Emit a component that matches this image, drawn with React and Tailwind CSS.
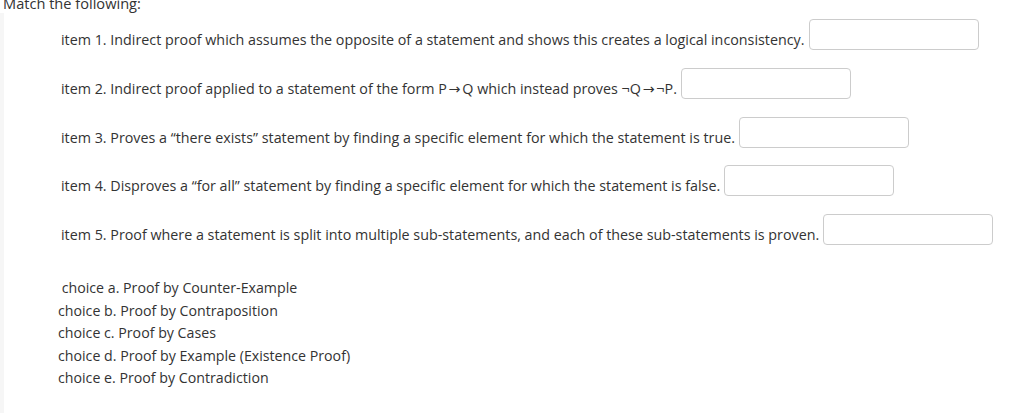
const Arrow = () => <span className="px-[1.75px]">{"\u2192"}</span>;

const items = [
  "item 1. Indirect proof which assumes the opposite of a statement and shows this creates a logical inconsistency.",
  <>
    item 2. Indirect proof applied to a statement of the form P<Arrow />Q which instead proves ¬Q<Arrow />¬P.
  </>,
  "item 3. Proves a \u201cthere exists\u201d statement by finding a specific element for which the statement is true.",
  "item 4. Disproves a \u201cfor all\u201d statement by finding a specific element for which the statement is false.",
  "item 5. Proof where a statement is split into multiple sub-statements, and each of these sub-statements is proven.",
];

const choices = [
  "\u00a0choice a. Proof by Counter-Example",
  "choice b. Proof by Contraposition",
  "choice c. Proof by Cases",
  "choice d. Proof by Example (Existence Proof)",
  "choice e. Proof by Contradiction",
];

export default function App() {
  return (
    <div
      className="w-[1020px] h-[413px] overflow-hidden bg-white text-[#333333]"
      style={{ fontFamily: '"Open Sans", "DejaVu Sans", sans-serif' }}
    >
      <div className="text-[14.6px] leading-[20px] pl-[3px] mt-[-7px]">Match the following:</div>
      <div className="border-l-[4px] border-[#f6f6f6] h-[400px] pl-[57px] pt-[6px]">
        <div className="flex flex-col gap-[17.75px]">
          {items.map((t, i) => (
            <div key={i} className="flex items-end h-[31px] text-[14.3px]">
              <span className="leading-[20px] whitespace-nowrap">{t}</span>
              <input
                type="text"
                className="ml-[4px] w-[170px] h-[31px] shrink-0 border border-[#cccccc] rounded-[4px] bg-white"
              />
            </div>
          ))}
        </div>
        <div className="mt-[32px] ml-[-3px] text-[14.2px] leading-[22.5px]">
          {choices.map((c, i) => (
            <div key={i}>{c}</div>
          ))}
        </div>
      </div>
    </div>
  );
}
